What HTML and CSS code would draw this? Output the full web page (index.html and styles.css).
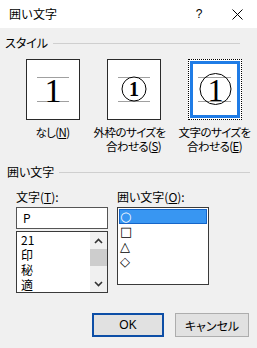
FILE: index.html
```html
<!DOCTYPE html>
<html lang="ja">
<head>
<meta charset="utf-8">
<link rel="stylesheet" href="styles.css">
</head>
<body>
<div class="dialog">
  <div class="titlebar">
    <div class="title">囲い文字</div>
    <div class="help">?</div>
    <div class="close">
      <svg width="11" height="11" viewBox="0 0 11 11"><path d="M0.5 0.5 L10.5 10.5 M10.5 0.5 L0.5 10.5" stroke="#000" stroke-width="1"/></svg>
    </div>
  </div>
  <div class="main">
    <div class="group-header g1"><span class="glabel">スタイル</span><span class="gline"></span></div>
    <div class="styles">
      <div class="opt">
        <div class="box">
          <svg width="52" height="59" viewBox="0 0 52 59">
            <line x1="10" y1="17.5" x2="42" y2="17.5" stroke="#a0a0a0"/>
            <line x1="10" y1="41.5" x2="42" y2="41.5" stroke="#a0a0a0"/>
            <text x="26" y="41.5" text-anchor="middle" class="serif1">1</text>
          </svg>
        </div>
        <div class="olabel"><div class="ln">なし(<u>N</u>)</div></div>
      </div>
      <div class="opt">
        <div class="box">
          <svg width="52" height="59" viewBox="0 0 52 59">
            <line x1="10" y1="17.5" x2="42" y2="17.5" stroke="#a0a0a0"/>
            <line x1="10" y1="41.5" x2="42" y2="41.5" stroke="#a0a0a0"/>
            <circle cx="26" cy="29" r="12" fill="#fff" stroke="#000" stroke-width="1"/>
            <text x="26" y="35.5" text-anchor="middle" class="serif1b">1</text>
          </svg>
        </div>
        <div class="olabel"><div class="ln shift">外枠のサイズを</div><div class="ln">合わせる(<u>S</u>)</div></div>
      </div>
      <div class="opt">
        <div class="box selected">
          <svg width="52" height="59" viewBox="0 0 52 59">
            <line x1="9" y1="17.5" x2="42" y2="17.5" stroke="#a0a0a0"/>
            <line x1="9" y1="41.5" x2="42" y2="41.5" stroke="#a0a0a0"/>
            <circle cx="26.5" cy="29" r="15.5" fill="none" stroke="#000" stroke-width="1"/>
            <text x="26.5" y="40.5" text-anchor="middle" class="serif1l">1</text>
          </svg>
        </div>
        <div class="olabel"><div class="ln">文字のサイズを</div><div class="ln">合わせる(<u>E</u>)</div></div>
      </div>
    </div>

    <div class="group-header g2"><span class="glabel">囲い文字</span><span class="gline"></span></div>
    <div class="fields">
      <div class="col">
        <div class="flabel">文字(<u>T</u>):</div>
        <div class="input">P</div>
        <div class="listbox left">
          <div class="items">
            <div class="item">21</div>
            <div class="item">印</div>
            <div class="item">秘</div>
            <div class="item">適</div>
          </div>
          <div class="scrollbar">
            <div class="sbtn"><svg width="9" height="6" viewBox="0 0 9 6"><path d="M1 5 L4.5 1.5 L8 5" fill="none" stroke="#333" stroke-width="1.6"/></svg></div>
            <div class="thumb"></div>
            <div class="track"></div>
            <div class="sbtn"><svg width="9" height="6" viewBox="0 0 9 6"><path d="M1 1 L4.5 4.5 L8 1" fill="none" stroke="#333" stroke-width="1.6"/></svg></div>
          </div>
        </div>
      </div>
      <div class="col">
        <div class="flabel">囲い文字(<u>O</u>):</div>
        <div class="listbox right">
          <div class="ritem sel">○</div>
          <div class="ritem">□</div>
          <div class="ritem">△</div>
          <div class="ritem">◇</div>
        </div>
      </div>
    </div>

    <div class="buttons">
      <div class="btn ok">OK</div>
      <div class="btn cancel">キャンセル</div>
    </div>
  </div>
</div>
</body>
</html>
```
FILE: styles.css
```css
* { box-sizing: border-box; }
html, body { margin: 0; padding: 0; }
body {
  width: 257px;
  height: 348px;
  font-family: "Noto Sans CJK JP", "Liberation Sans", sans-serif;
  font-size: 12px;
  font-feature-settings: "palt";
  color: #000;
  background: #f0f0f0;
  overflow: hidden;
}
.dialog { width: 257px; height: 348px; display: flex; flex-direction: column; }
.titlebar {
  height: 28px;
  background: #fff;
  display: flex;
  align-items: center;
  padding-left: 9px;
}
.title { flex: 1; font-size: 12px; line-height: 16px; font-feature-settings: normal; }
.help { width: 24px; text-align: center; margin-right: 6px; font-size: 12px; font-family: "Liberation Sans", sans-serif; }
.close { width: 40px; height: 28px; display: flex; align-items: center; justify-content: center; }
.main { flex: 1; background: #f0f0f0; padding-top: 7px; }

.group-header { display: flex; align-items: center; height: 16px; line-height: 16px; }
.group-header.g1 { padding-left: 5px; padding-right: 17px; }
.group-header.g2 { padding-left: 7px; padding-right: 7px; margin-top: 11px; }
.glabel { white-space: nowrap; margin-right: 5px; }
.gline { flex: 1; height: 1px; background: #cfcfcf; }

.styles {
  margin-top: 8px;
  padding-left: 12px;
  display: grid;
  grid-template-columns: repeat(3, 81px);
}
.opt { display: flex; flex-direction: column; align-items: center; }
.box {
  width: 54px;
  height: 61px;
  background: #fff;
  border: 1px solid #2a2a2a;
}
.box svg { display: block; }
.box.selected {
  border: 1px dotted #000;
  box-shadow: inset 0 0 0 1px #fff, inset 0 0 0 4px #1f7ce6;
}
.serif1 { font-family: "Liberation Serif", serif; font-size: 34px; fill: #000; }
.serif1b { font-family: "Liberation Serif", serif; font-size: 20px; font-weight: bold; fill: #000; }
.serif1l { font-family: "Liberation Serif", serif; font-size: 32px; fill: #000; }
.olabel {
  margin-top: 5px;
  display: flex;
  flex-direction: column;
  align-items: center;
  white-space: nowrap;
  letter-spacing: -0.6px;
}
.ln { height: 14px; line-height: 14px; font-size: 11.5px; }
.shift { position: relative; left: -4px; }
u { text-decoration: underline; text-underline-offset: 1px; }

.fields {
  display: grid;
  grid-template-columns: 92px 92px;
  column-gap: 9px;
  padding-left: 16px;
  margin-top: 10px;
}
.col { display: flex; flex-direction: column; }
.flabel { line-height: 14px; white-space: nowrap; }
.input {
  margin-top: 3px;
  height: 22px;
  background: #fff;
  border: 1px solid #555;
  padding-left: 6px;
  line-height: 20px;
}
.listbox { background: #fff; border: 1px solid #3a3a3a; }
.listbox.left { margin-top: 2px; height: 62px; display: flex; }
.items { flex: 1; padding-left: 4px; }
.item { line-height: 15px; height: 15px; }
.scrollbar { width: 17px; display: flex; flex-direction: column; background: #f0f0f0; }
.sbtn { height: 17px; display: flex; align-items: center; justify-content: center; }
.thumb { height: 17px; background: #cdcdcd; }
.track { height: 9px; }
.listbox.right { margin-top: 3px; height: 78px; padding: 1px; }
.ritem {
  height: 15px;
  line-height: 15px;
  padding-left: 1px;
  font-family: "DejaVu Sans", sans-serif;
  font-size: 13px;
  font-feature-settings: normal;
  color: #000;
}
.ritem.sel { background: #3896f2; border: 1px solid #1565c8; color: #fff; padding-left: 0; line-height: 13px; }

.buttons {
  margin-top: 20px;
  display: flex;
  justify-content: flex-end;
  gap: 11px;
  padding-right: 8px;
}
.btn {
  height: 24px;
  background: #e1e1e1;
  display: flex;
  align-items: center;
  justify-content: center;
}
.btn.ok { width: 72px; border: 2px solid #0d4ea6; font-family: "Liberation Sans", sans-serif; }
.btn.cancel { width: 74px; border: 1px solid #adadad; }
```
